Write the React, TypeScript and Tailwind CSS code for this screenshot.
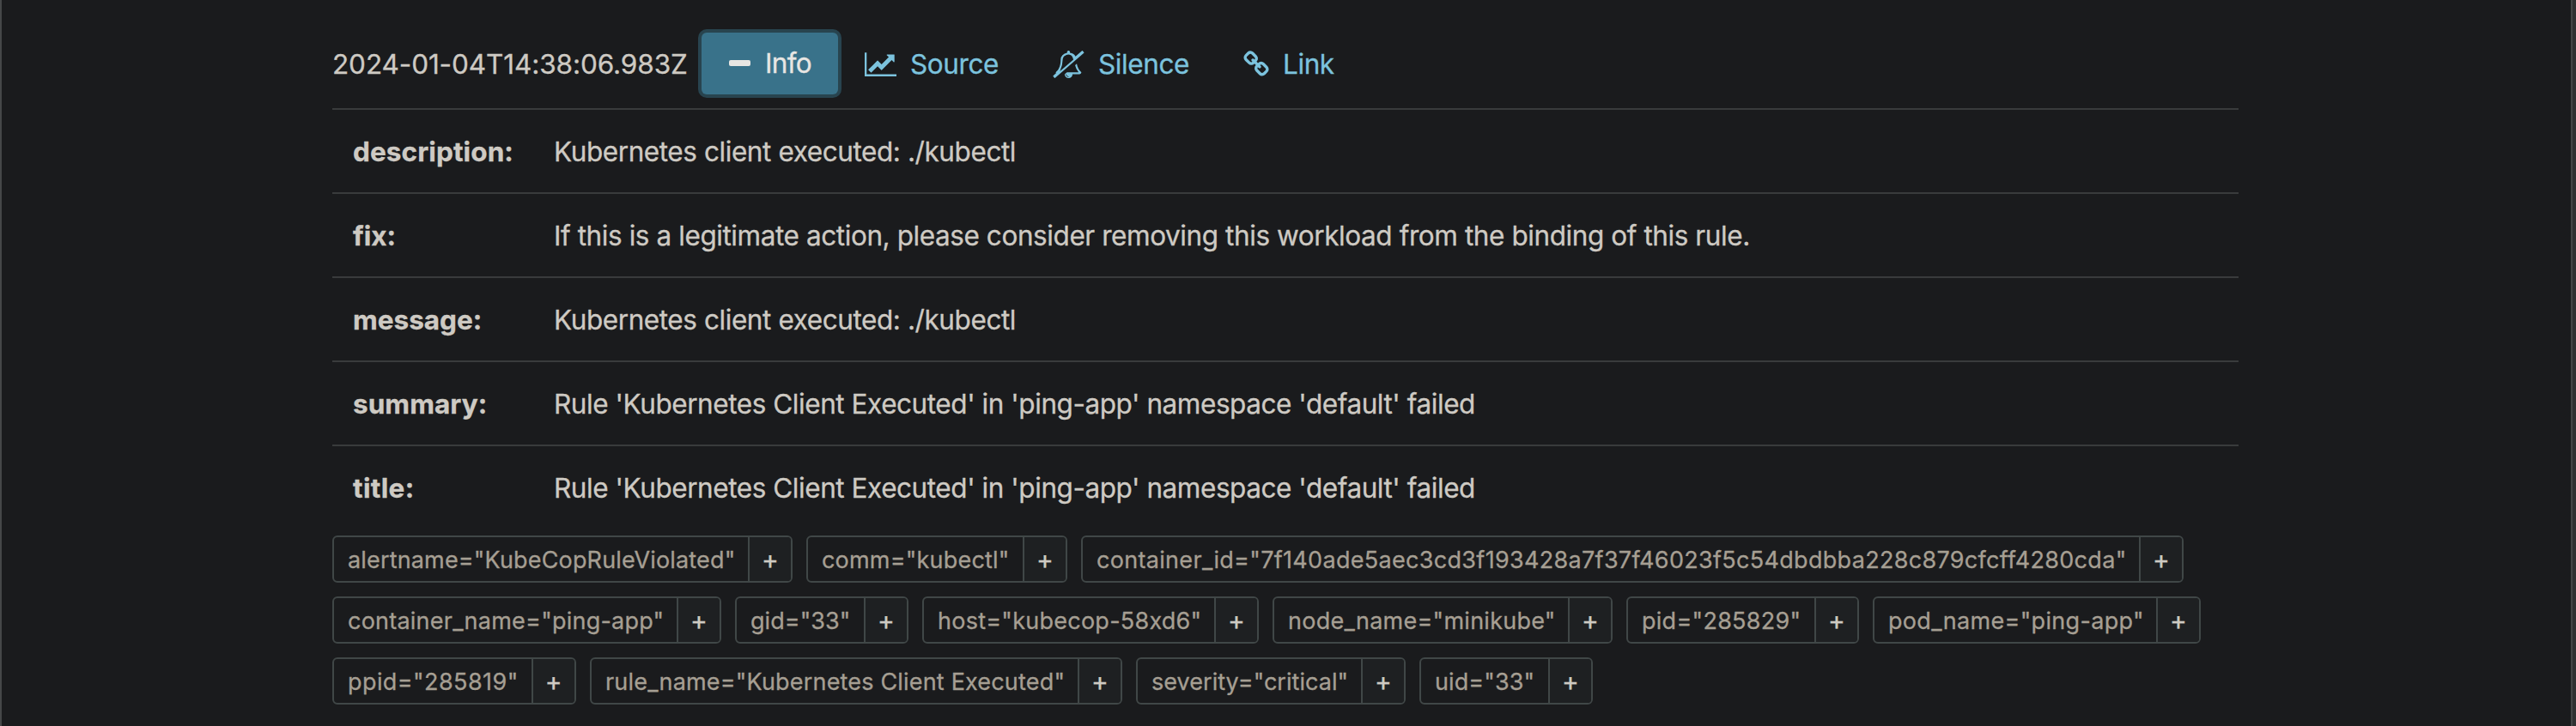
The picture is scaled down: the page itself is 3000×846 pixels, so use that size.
import type { ReactNode } from "react";

type Annotation = { name: string; value: string; nameClass: string; valueClass: string };
type Label = { text: string; className: string };

const annotations: Annotation[] = [
  { name: "description:", value: "Kubernetes client executed: ./kubectl", nameClass: "tracking-[0.1px]", valueClass: "tracking-[-0.42px]" },
  {
    name: "fix:",
    value: "If this is a legitimate action, please consider removing this workload from the binding of this rule.",
    nameClass: "tracking-[0px]",
    valueClass: "tracking-[-0.42px]",
  },
  { name: "message:", value: "Kubernetes client executed: ./kubectl", nameClass: "tracking-[0px]", valueClass: "tracking-[-0.42px]" },
  {
    name: "summary:",
    value: "Rule 'Kubernetes Client Executed' in 'ping-app' namespace 'default' failed",
    nameClass: "tracking-[0.05px]",
    valueClass: "tracking-[-0.44px]",
  },
  {
    name: "title:",
    value: "Rule 'Kubernetes Client Executed' in 'ping-app' namespace 'default' failed",
    nameClass: "tracking-[0.35px]",
    valueClass: "tracking-[-0.44px]",
  },
];

const labelRows: Label[][] = [
  [
    { text: 'alertname="KubeCopRuleViolated"', className: "w-[536px] tracking-[0.16px]" },
    { text: 'comm="kubectl"', className: "w-[304px] tracking-[0.2px]" },
    {
      text: 'container_id="7f140ade5aec3cd3f193428a7f37f46023f5c54dbdbba228c879cfcff4280cda"',
      className: "w-[1284px] tracking-[0.31px]",
    },
  ],
  [
    { text: 'container_name="ping-app"', className: "w-[453px] tracking-[0.23px]" },
    { text: 'gid="33"', className: "w-[202px] tracking-[0.05px]" },
    { text: 'host="kubecop-58xd6"', className: "w-[392px] tracking-[0.25px]" },
    { text: 'node_name="minikube"', className: "w-[396px] tracking-[0.26px]" },
    { text: 'pid="285829"', className: "w-[271px] tracking-[0.27px]" },
    { text: 'pod_name="ping-app"', className: "w-[382px] tracking-[0.32px]" },
  ],
  [
    { text: 'ppid="285819"', className: "w-[284px] tracking-[0.42px]" },
    { text: 'rule_name="Kubernetes Client Executed"', className: "w-[620px] tracking-[0.18px]" },
    { text: 'severity="critical"', className: "w-[314px] tracking-[0.04px]" },
    { text: 'uid="33"', className: "w-[202px] tracking-[0.1px]" },
  ],
];

function ChartIcon() {
  return (
    <svg className="h-7 w-[37px] shrink-0" viewBox="0 128 2048 1536" fill="currentColor" aria-hidden="true">
      <path d="M2048 1536v128h-2048v-1536h128v1408h1920zm-128-1248v435q0 21-19.5 29.5t-35.5-7.5l-121-121-633 633q-10 10-23 10t-23-10l-233-233-416 416-192-192 585-585q10-10 23-10t23 10l233 233 464-464-121-121q-16-16-7.5-35.5t29.5-19.5h435q14 0 23 9t9 23z" />
    </svg>
  );
}

function BellSlashIcon() {
  return (
    <svg className="h-8 w-[37px] shrink-0" viewBox="0 0 2048 1792" fill="currentColor" aria-hidden="true">
      <path d="M1040 1696q0-16-16-16-59 0-101.5-42.5t-42.5-101.5q0-16-16-16t-16 16q0 73 51.5 124.5t124.5 51.5q16 0 16-16zm-582-351l877-760c-42-200-150-329-311-329q-93 0-169.5 31.5t-121.5 80.5-69 103-24 105q0 384-182 769zm1398 63q0 52-38 90t-90 38h-448q0 106-75 181t-181 75-180.5-74.5-75.5-180.5l149-129h757q-166-187-227-459l111-97q61 356 298 556zm81-1393l84 96q8 10 7.5 23.5t-10.5 22.5l-1872 1622q-10 8-23.5 7t-21.5-11l-84-96q-8-10-7.5-23.5t10.5-21.5l186-161q-19-32-19-66 50-42 91-88t85-119.5 74.5-158.5 50-206 19.5-260q0-152 117-282.5t307-158.5q-8-19-8-39 0-40 28-68t68-28 68 28 28 68q0 20-8 39 124 18 219 82.5t148 157.5l418-363q10-8 23.5-7t21.5 11z" />
    </svg>
  );
}

function LinkIcon() {
  return (
    <svg className="h-8 w-8 shrink-0" viewBox="0 0 1792 1792" fill="currentColor" aria-hidden="true">
      <path d="M1520 1216q0-40-28-68l-208-208q-28-28-68-28-42 0-72 32 3 3 19 18.5t21.5 21.5 15 19 13 25.5 3.5 27.5q0 40-28 68t-68 28q-15 0-27.5-3.5t-25.5-13-19-15-21.5-21.5-18.5-19q-33 31-33 73 0 40 28 68l206 207q27 27 68 27 40 0 68-26l147-146q28-28 28-67zm-703-705q0-40-28-68l-206-207q-28-28-68-28-39 0-68 27l-147 146q-28 28-28 67 0 40 28 68l208 208q27 27 68 27 42 0 72-31-3-3-19-18.5t-21.5-21.5-15-19-13-25.5-3.5-27.5q0-40 28-68t68-28q15 0 27.5 3.5t25.5 13 19 15 21.5 21.5 18.5 19q33-31 33-73zm895 705q0 120-85 203l-147 146q-83 83-203 83-121 0-204-85l-206-207q-83-83-83-203 0-123 88-209l-88-88q-86 88-208 88-120 0-204-84l-208-208q-84-84-84-204t85-203l147-146q83-83 203-83 121 0 204 85l206 207q83 83 83 203 0 123-88 209l88 88q86-88 208-88 120 0 204 84l208 208q84 84 84 204z" />
    </svg>
  );
}

function ActionLink({ icon, className, children }: { icon: ReactNode; className: string; children: ReactNode }) {
  return (
    <button className={`flex items-center whitespace-nowrap pt-0.5 text-[#7cc3de] ${className}`}>
      {icon}
      {children}
    </button>
  );
}

function LabelChip({ text, className }: Label) {
  return (
    <div
      className={`flex h-[55px] shrink-0 overflow-hidden rounded-[6px] border-2 border-[#404747] text-[27px] leading-[53px] text-[#a69f93] ${className}`}
    >
      <span className="min-w-0 flex-1 whitespace-nowrap pl-4">{text}</span>
      <button className="flex w-[50px] shrink-0 items-center justify-center border-l-2 border-[#404747] bg-[#1e2022] pt-px text-[30px] text-[#cecac3]">
        +
      </button>
    </div>
  );
}

export default function App() {
  return (
    <div className="flex h-[846px] w-[3000px] overflow-hidden border-l-2 border-[#454748] bg-[#1a1b1d] font-['Inter','Liberation_Sans',sans-serif] text-[31.5px] text-[#cecac3] [-webkit-text-stroke:0.3px]">
      <main className="flex flex-1 flex-col pl-[385px]">
        <header className="flex h-[126px] items-center pt-[22px]">
          <time className="w-[430px] whitespace-nowrap pt-0.5 tracking-[-0.1px]">2024-01-04T14:38:06.983Z</time>
          <button className="flex h-[72px] w-[159px] items-center rounded-[6px] bg-[#39728a] pl-8 tracking-[-0.7px] text-[#e8e6e3] ring-4 ring-[#28444f]">
            <span className="mr-[17px] mb-0.5 h-[7px] w-[25px] rounded-[2px] bg-[#e8e6e3]" />
            Info
          </button>
          <ActionLink className="ml-[31px] w-[157px] gap-4 tracking-[-0.4px]" icon={<ChartIcon />}>
            Source
          </ActionLink>
          <ActionLink className="ml-[62px] w-[161px] gap-4 tracking-[-0.4px]" icon={<BellSlashIcon />}>
            Silence
          </ActionLink>
          <ActionLink className="ml-[60px] gap-[15px] tracking-[-0.4px]" icon={<LinkIcon />}>
            Link
          </ActionLink>
        </header>

        <dl className="w-[2220px]">
          {annotations.map((a) => (
            <div key={a.name} className="flex h-[98px] items-center border-t-2 border-[#393b3c] pt-px pl-6">
              <dt className={`w-[234px] font-bold ${a.nameClass}`}>{a.name}</dt>
              <dd className={`whitespace-nowrap ${a.valueClass}`}>{a.value}</dd>
            </div>
          ))}
        </dl>

        <div className="mt-2 flex flex-col gap-4">
          {labelRows.map((row) => (
            <div key={row[0].text} className="flex gap-4">
              {row.map((label) => (
                <LabelChip key={label.text} {...label} />
              ))}
            </div>
          ))}
        </div>
      </main>
      <aside className="w-1.5 border-l-2 border-[#434546] bg-[#2f3031]" />
    </div>
  );
}
